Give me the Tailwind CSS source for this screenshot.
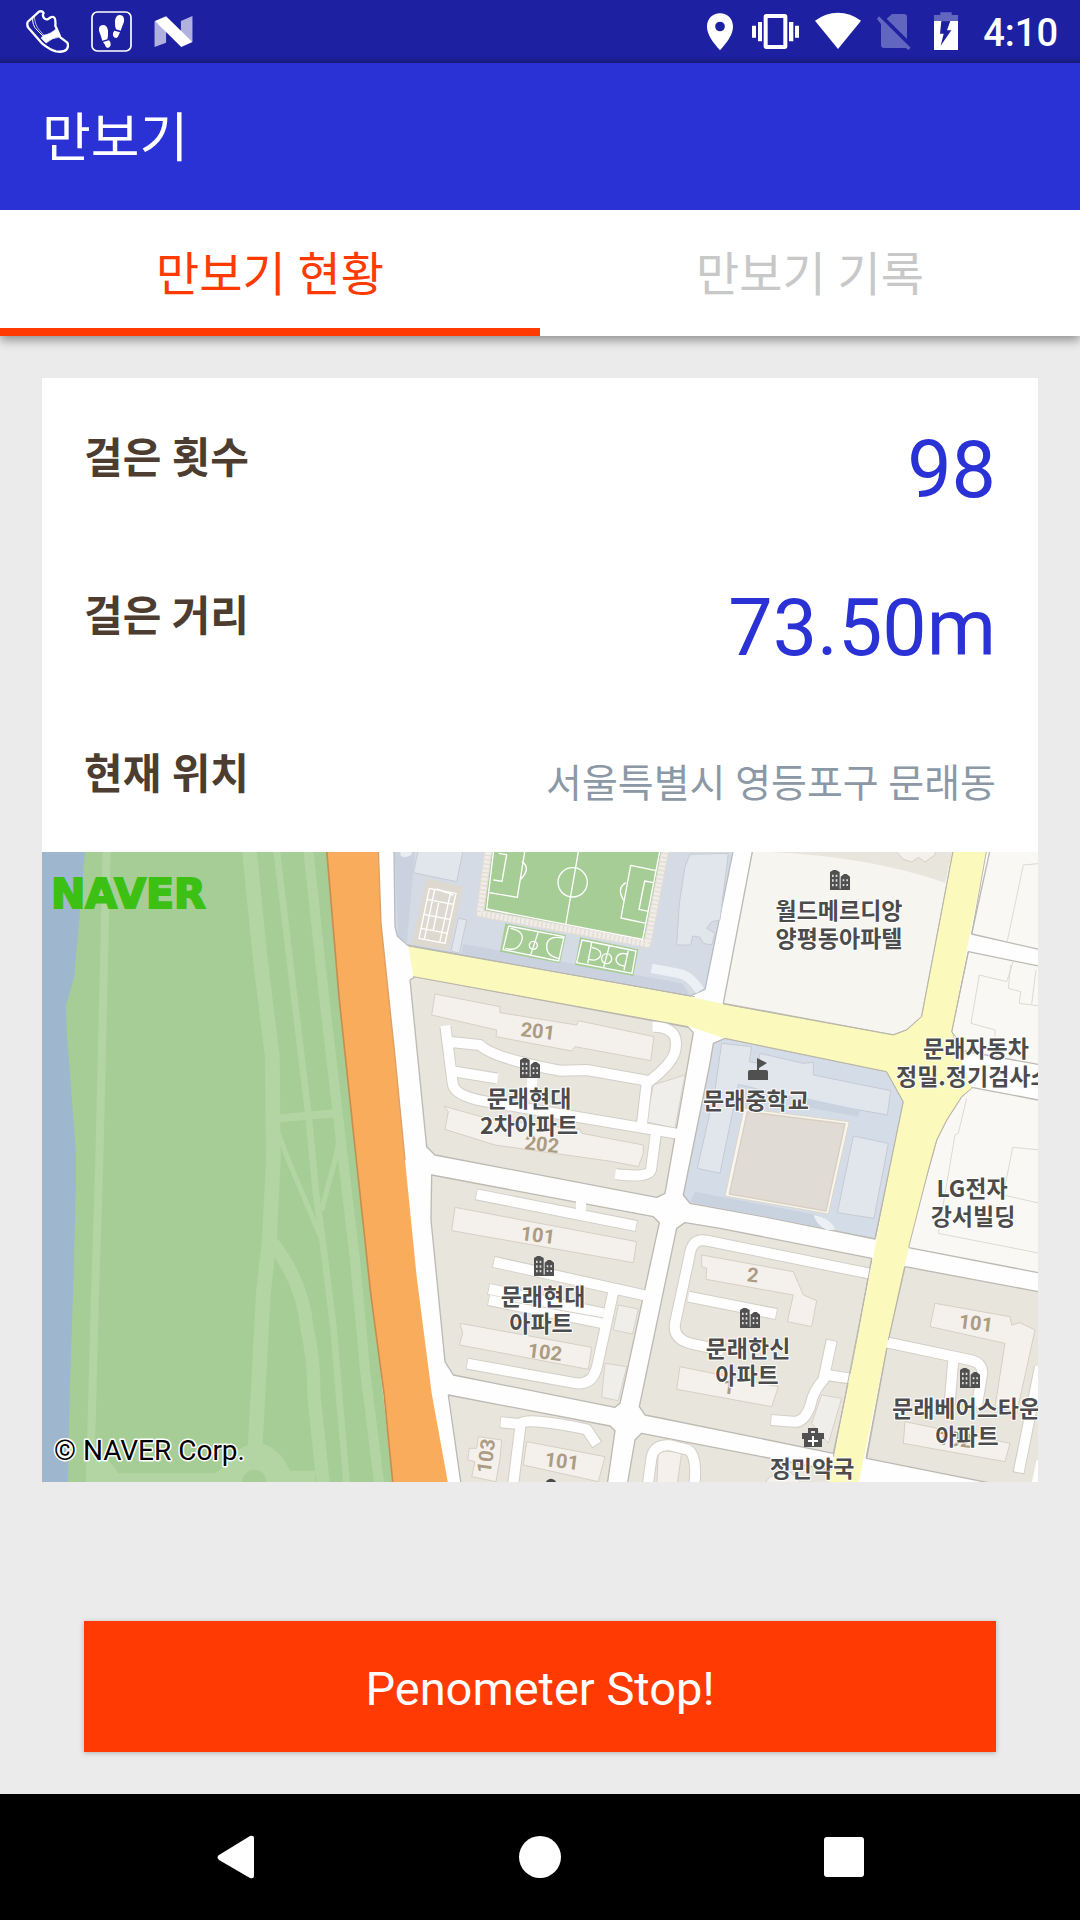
<!DOCTYPE html>
<html lang="ko">
<head>
<meta charset="utf-8">
<meta name="viewport" content="width=device-width, initial-scale=1">
<title>만보기</title>
<script src="https://cdn.jsdelivr.net/npm/@tailwindcss/browser@4"></script>
</head>
<body class="flex min-h-screen flex-col bg-[#ebebeb] font-[Roboto,'Noto_Sans_CJK_KR',sans-serif]">

<!-- Status bar -->
<div class="flex h-[63px] items-center justify-between bg-linear-to-b from-[#1d21a1] from-90% to-[#191c80] pr-[22px] pl-[26px] text-white">
  <div class="flex items-center gap-[22px]">
    <svg class="h-[43px] w-[43px]" viewBox="78 30 129 129" fill="none" stroke="#fff" stroke-width="7" stroke-linejoin="round" stroke-linecap="round" aria-label="신발">
      <path d="M83 66Q80 76 85 83L127 131Q150 150 168 154Q190 158 200 148Q207 138 202 128Q192 120 181 112L166 77Q168 54 160 51Q154 49 146 56Q138 61 132 54Q126 47 131 39Q126 31 117 35Z"/>
      <path d="M98 53Q96 76 111 90L130 109" stroke-width="3"/>
      <path d="M103 50Q105 76 118 90L131 105" stroke-width="2"/>
      <path d="M131 106Q154 102 171 84L180 111Q158 112 138 129L124 115Z" fill="#fff" stroke-width="2"/>
    </svg>
    <svg class="h-[41px] w-[41px]" viewBox="270 33 123 123" fill="#fff" aria-label="발자국">
      <rect x="273" y="36" width="117" height="117" rx="16" fill="none" stroke="#fff" stroke-width="5"/>
      <path d="M294 92Q292 76 306 75Q319 75 321 92Q322 108 319 118L304 122Q300 108 294 92Z"/>
      <path d="M306 126L324 121Q330 125 329 136Q327 144 320 144Q313 142 311 133Z"/>
      <path d="M369 65Q371 46 357 45Q344 45 342 62Q341 78 345 88L359 92Q363 80 369 65Z"/>
      <path d="M357 97L340 92Q334 98 336 107Q339 114 346 114Q351 112 353 106Z"/>
    </svg>
    <svg class="h-[31px] w-[39px]" viewBox="462 47 117 94" fill="#fff" aria-label="N">
      <path d="M463 62L498 88V128L463 141Z" opacity=".65"/>
      <path d="M543 62L578 47V126L543 98Z" opacity=".65"/>
      <path d="M464 62L498 48L578 126L544 141Z"/>
    </svg>
  </div>
  <div class="flex items-center gap-4">
    <svg class="h-[42px] w-[31px]" viewBox="75 33 93 126" fill="#fff" aria-label="위치">
      <path fill-rule="evenodd" d="M120 40C97 40 81 57 81 80C81 104 100 128 120 151C140 128 159 104 159 80C159 57 143 40 120 40ZM120 65A14.500 14.500 0 1 1 120 94A14.500 14.500 0 1 1 120 65Z"/>
    </svg>
    <svg class="h-[42px] w-[47px]" viewBox="216 33 141 126" fill="#fff" aria-label="진동">
      <path fill-rule="evenodd" d="M259 42H314Q322 42 322 50V139Q322 147 314 147H259Q251 147 251 139V50Q251 42 259 42ZM263 54V135H310V54Z"/>
      <path d="M216 77H228V113H216ZM234 66H246V124H234ZM327 66H340V124H327ZM345 77H357V113H345Z"/>
    </svg>
    <svg class="h-[42px] w-[46px]" viewBox="402 33 138 126" fill="#fff" aria-label="와이파이">
      <path d="M402 62Q434 38 471 38Q508 38 540 62L471 147Z"/>
    </svg>
    <svg class="h-[42px] w-[34px]" viewBox="591 33 102 126" fill="#6366be" aria-label="SIM 없음">
      <path d="M620 56L636 42H672Q681 42 681 51V117Z"/>
      <path d="M603 72L591 57L597 49L692 143L685 150L678 144H612Q603 144 603 135Z"/>
    </svg>
    <svg class="h-[42px] w-[40px]" viewBox="741 33 120 126" aria-label="충전 중">
      <path d="M762 64V45H781V37H815V45H834V64Z" fill="#6366be"/>
      <path fill="#fff" fill-rule="evenodd" d="M762 63H834V150H762ZM784 63L780 101H791L782 137L814 91H801L811 63Z"/>
    </svg>
    <time class="pt-[2px] text-[38px] leading-none font-medium">4:10</time>
  </div>
</div>

<!-- Title bar and tabs -->
<header class="relative shadow-[0_4px_10px_rgba(0,0,0,0.4)]">
  <div class="flex h-[147px] items-center bg-[#2a31d5] px-[42px] pt-[6px]">
    <h1 class="text-[53px] leading-none text-white">만보기</h1>
  </div>
  <nav class="grid h-[126px] grid-cols-2 bg-white text-[47px] leading-none">
    <a href="#status" aria-current="page" class="flex items-center justify-center border-b-8 border-[#ff3a02] pt-[10px] text-[#ff3a02]">만보기 현황</a>
    <a href="#history" class="flex items-center justify-center border-b-8 border-white pt-[10px] text-[#c8c8c8]">만보기 기록</a>
  </nav>
</header>

<main id="status" class="flex flex-1 flex-col px-[42px] py-[42px]">
  <section class="bg-white">
    <dl>
      <div class="flex h-[158px] items-center justify-between px-[42px]">
        <dt class="pt-[4px] text-[42px] leading-none font-bold text-[#4c3d30]">걸은 횟수</dt>
        <dd class="pt-[26px] text-[79px] leading-none text-[#2a31d5]">98</dd>
      </div>
      <div class="flex h-[158px] items-center justify-between px-[42px]">
        <dt class="pt-[4px] text-[42px] leading-none font-bold text-[#4c3d30]">걸은 거리</dt>
        <dd class="pt-[26px] text-[79px] leading-none text-[#2a31d5]">73.50m</dd>
      </div>
      <div class="flex h-[158px] items-center justify-between px-[42px]">
        <dt class="pt-[4px] text-[42px] leading-none font-bold text-[#4c3d30]">현재 위치</dt>
        <dd class="pt-[22px] text-[39px] leading-none text-[#8c98a6]">서울특별시 영등포구 문래동</dd>
      </div>
    </dl>

    <!-- Map: terrain is drawn in thirds of a unit, labels in whole units -->
    <svg class="block w-full" viewBox="42 852 996 630" role="img" aria-label="문래동 지도">
      <defs>
        <symbol id="apt" viewBox="0 0 60 60">
          <path d="M0 60V6L10 0H18L29 6V60ZM32 60V20L42 12H50L60 20V60Z" fill="#505050"/>
          <path d="M0 56H60V60H0Z" fill="#505050"/>
          <path d="M6 14h5v7H6zM17 14h5v7h-5zM6 28h5v7H6zM17 28h5v7h-5zM6 42h5v7H6zM17 42h5v7h-5zM38 28h5v6h-5zM49 28h5v6h-5zM38 42h5v6h-5zM49 42h5v6h-5z" fill="#ddd"/>
        </symbol>
      </defs>
      <rect x="42" y="852" width="996" height="630" fill="#fefefe"/>

      <!-- River park -->
      <g transform="translate(40 850) scale(.33333)" fill="none" stroke="#b3d5a3" stroke-linejoin="round">
        <path d="M0 0H862L950 930L1060 1905H0Z" fill="#a7cd96" stroke="none"/>
        <path d="M0 0H135L120 180L103 380L78 465L80 540L95 740L108 910V1000L100 1300L90 1600L84 1905H0Z" fill="#9fb6cf" stroke="none"/>
        <path d="M200 0L190 420L178 930L165 1330L150 1905" stroke-width="24"/>
        <path d="M628 0L660 320L697 620L700 930L688 1170L670 1330L645 1800" stroke-width="44"/>
        <path d="M710 0L760 420L805 790L828 1030L850 1190L880 1430L920 1905" stroke-width="20"/>
        <path d="M805 0L850 420L900 850L945 1230L975 1560L1018 1905" stroke-width="30"/>
        <path d="M720 805L885 790" stroke-width="24"/>
        <path d="M715 850L745 930L842 1160M897 870L885 930L845 1080" stroke-width="15"/>
        <path d="M695 1175Q790 1300 800 1430Q822 1520 822 1640L850 1905" stroke-width="40"/>
        <path d="M138 1905V1830H205L235 1870H525L550 1850Q600 1780 650 1780Q710 1780 750 1862H825V1905Z" fill="#b3d5a3" stroke="none"/>
        <circle cx="643" cy="1895" r="36" fill="#a7cd96" stroke="none"/>
      </g>

      <!-- Expressway -->
      <g transform="translate(320 850) scale(.33333)">
        <path d="M20 0L57 440L109 930L152 1330L192 1630L219 1905H385L335 1630L290 1280L255 930L225 620L183 220L175 0Z" fill="#f9ac5b"/>
        <path d="M20 0L57 440L109 930L152 1330L192 1630L219 1905" fill="none" stroke="#c58f50" stroke-width="5"/>
        <path d="M175 0L183 220L225 620L255 930" fill="none" stroke="#dba069" stroke-width="4"/>
      </g>

      <!-- North: sports ground -->
      <g transform="translate(320 850) scale(.33333)" stroke-linejoin="round">
        <path d="M222 0L225 230L232 258L262 285L1110 438L1155 418L1240 0Z" fill="#d4dbe5" stroke="#b9bcc2" stroke-width="4"/>
        <path d="M224 0H285L260 283L234 256Z" fill="#c9d2de"/>
        <path d="M430 282L1085 400L1110 434L425 312Z" fill="#c9d2de"/>
        <path d="M295 0H430L410 95L280 68Z" fill="#e1e6ed" stroke="#c6cbd3" stroke-width="3"/>
        <path d="M240 0H275V15L255 22L242 18Z" fill="#e8edf1"/>
        <path d="M415 205L440 210L418 310L393 303Z" fill="#e1e6ed" stroke="#c6cbd3" stroke-width="3"/>
        <path d="M320 85L430 110L385 300L275 283Z" fill="#ded9d0"/>
        <path d="M328 115L408 130L375 280L297 265ZM344 118L313 268M392 127L359 277M322 148L400 163M311 193L393 209M305 235L384 250M356 158L340 240M350 117L400 135" fill="none" stroke="#fff" stroke-width="4"/>
        <path d="M508 -20L480 190L982 282L1040 -20Z" fill="#a7cd96" stroke="#e2dcd5" stroke-width="24"/>
        <path d="M508 -20L480 190L982 282L1040 -20Z" fill="none" stroke="#f0ece7" stroke-width="18" stroke-dasharray="9 4"/>
        <g fill="none" stroke="#fff" stroke-width="4">
          <path d="M521 0L500 177L968 268L1020 0M776 0L737 225M508 128L592 142L615 0M520 90L546 94L560 14L536 10M606 35Q634 55 602 88M1008 62L932 46L903 204L978 220M1000 98L974 93L957 178L985 184M918 98Q888 115 912 152"/>
          <circle cx="758" cy="97" r="44"/>
        </g>
        <path d="M556 220L738 255L720 340L540 305ZM780 262L955 298L940 378L765 345Z" fill="#a7cd96"/>
        <g fill="none" stroke="#fff" stroke-width="4">
          <path d="M566 228L732 260L716 333L549 299ZM654 248L632 315M572 235Q620 245 602 280Q590 305 556 295M730 264Q680 255 680 290Q680 318 716 325M786 270L948 303L936 370L770 338ZM868 288L850 355M815 278L803 340M925 302L912 360M815 292Q850 300 840 320Q830 335 806 328M922 312Q890 305 888 330Q890 345 912 348"/>
          <circle cx="640" cy="286" r="12"/><circle cx="860" cy="326" r="15"/>
        </g>
        <path d="M1110 13L1225 10L1200 210L1175 215L1160 235L1185 250L1175 285L1150 280L1140 262L1118 258L1112 285L1070 285L1078 160L1095 50Z" fill="#e1e6ed" stroke="#c6cbd3" stroke-width="3"/>
        <path d="M995 355L1075 370Q1110 375 1140 422" fill="none" stroke="#eaf0f4" stroke-width="28"/>
      </g>

      <!-- North east blocks and middle school -->
      <g transform="translate(670 850) scale(.33333)" stroke="#bdb9b3" stroke-width="4" stroke-linejoin="round">
        <path d="M248 0L160 460L670 555L710 540L755 500L850 0Z" fill="#f6f5f0"/>
        <path d="M300 6Q600 20 825 98L848 0Z" fill="#e8e5dd" stroke="none"/>
        <path d="M675 0L700 28L725 36L745 22L765 36L795 15V0Z" fill="#f4f1ec" stroke="#d6cfc4" stroke-width="3"/>
        <path d="M960 0L905 252L1115 300V0Z" fill="#f9f8f4"/>
        <path d="M1115 40L1060 45L1012 272" fill="none" stroke="#dcdad4" stroke-width="3"/>
        <path d="M895 305L1115 350V645L865 600L845 545Z" fill="#f9f8f4"/>
        <path d="M928 375L1010 395L1030 335M1022 345L1015 415L1052 425L1048 460L1110 468M1098 360L1085 462M975 560V540L903 520L928 375" fill="none" stroke="#dcdad4" stroke-width="3"/>
        <path d="M905 712L1115 752V1270L712 1192L775 960L800 870L830 810L875 740Z" fill="#f9f8f4"/>
        <path d="M890 745L865 850L855 855L805 1150L1110 1210M1110 900L1028 892L1000 1035L1110 1060" fill="none" stroke="#dcdad4" stroke-width="3"/>
        <path d="M165 565L130 580L120 640L40 1035L60 1060L280 1100L615 1167L660 950L700 755L650 665Z" fill="#d4dce7"/>
        <path d="M75 1025L440 1095L490 1140L60 1056Z" fill="#c9d3df" stroke="none"/>
        <path d="M430 1095Q485 1105 495 1140H470Q440 1125 430 1095Z" fill="#eaf0f4" stroke="none"/>
        <path d="M155 580L245 590L238 635L265 640L270 610L400 640L430 637V675L662 722L652 795L375 745L205 703L150 970L82 955L135 720Z" fill="#e1e6ed" stroke="#c6cbd3" stroke-width="3"/>
        <path d="M550 858L655 880L612 1105L502 1088Z" fill="#e1e6ed" stroke="#c6cbd3" stroke-width="3"/>
        <path d="M390 740L570 780L565 800L400 770Z" fill="#c9d3df" stroke="none"/>
        <path d="M222 775L538 815L475 1092L165 1038Z" fill="#f7f5ef" stroke="#ddd6c8" stroke-width="3"/>
        <path d="M232 785L525 822L468 1083L178 1032Z" fill="#e0dcd5" stroke="#d8cfc0" stroke-width="4"/>
      </g>

      <!-- Housing blocks west -->
      <g transform="translate(320 850) scale(.33333)" stroke="#bdb9b3" stroke-width="4" stroke-linejoin="round">
        <path d="M270 390L285 380L1105 532L1120 548L1035 1030L1010 1042L345 915L320 890Z" fill="#e8e5dd"/>
        <path d="M1000 705L1095 675L1065 835L978 815Z" fill="#efeeea" stroke="#d6d2ca" stroke-width="3"/>
        <path d="M345 432L540 470V488L770 525L775 512L1002 560L992 632L765 590L755 603L528 560L530 540L335 495Z" fill="#f4f1ec" stroke="#d6cfc4" stroke-width="3"/>
        <path d="M372 768L395 775L500 805L780 838L785 850L970 885V910L955 950L880 935L525 885L375 838L385 785Z" fill="#f4f1ec" stroke="#d6cfc4" stroke-width="3"/>
        <path d="M376 530L398 700Q402 738 500 755L1065 850M385 575L480 585Q520 625 720 662L800 660L980 692M405 665L530 685M1000 530Q1080 530 1066 600Q1060 640 980 700L965 825M1008 850L993 960Q985 985 888 972" fill="none" stroke="#d3cec6" stroke-width="36"/>
        <path d="M376 527L398 700Q402 738 500 755L1070 851M385 575L480 585Q520 625 720 662L800 660L980 692M405 665L533 686M998 530Q1080 530 1066 600Q1060 640 980 700L965 830M1008 845L993 960Q985 985 886 972M638 670L632 750" fill="none" stroke="#fefefe" stroke-width="30"/>

        <path d="M335 975L1000 1100L1018 1118L900 1660L885 1672L400 1575L375 1535L333 1110Z" fill="#e8e5dd"/>
        <path d="M405 1072L950 1175L940 1238L395 1142ZM420 1420L815 1492L805 1558L418 1485L428 1450Z" fill="#f4f1ec" stroke="#d6cfc4" stroke-width="3"/>
        <path d="M895 1365L955 1377L938 1452L880 1440ZM855 1540L920 1550L895 1652L845 1642Z" fill="#efeeea" stroke="#d6d2ca" stroke-width="3"/>
        <path d="M468 1033L950 1128M520 1235L970 1335M505 1317L850 1390M505 1350L850 1420M880 1325L832 1545Q820 1605 770 1600L440 1541" fill="none" stroke="#d3cec6" stroke-width="36"/>
        <path d="M470 1033L948 1128M522 1236L975 1336M507 1317L850 1390M507 1350L850 1420M880 1325L832 1545Q820 1605 770 1600L442 1541M783 1050V1090" fill="none" stroke="#fefefe" stroke-width="30"/>
        <path d="M560 1352L850 1404" fill="none" stroke="#d3cec6" stroke-width="3"/>

        <path d="M385 1635L870 1728L885 1742L860 1915H425Z" fill="#e8e5dd"/>
        <path d="M620 1775L855 1820L835 1895L610 1845ZM475 1760L545 1770L540 1825L528 1895L455 1880L465 1835L443 1830L448 1795L470 1795Z" fill="#f4f1ec" stroke="#d6cfc4" stroke-width="3"/>
        <path d="M540 1717L600 1722Q620 1700 800 1738L832 1785M602 1722L578 1915" fill="none" stroke="#d3cec6" stroke-width="36"/>
        <path d="M542 1717L600 1722Q620 1700 800 1738L830 1783M602 1722L578 1915" fill="none" stroke="#fefefe" stroke-width="30"/>
        <circle cx="693" cy="1902" r="16" fill="#4a4a4a" stroke="none"/>
      </g>

      <!-- Housing blocks east -->
      <g transform="translate(670 1160) scale(.33333)" stroke="#bdb9b3" stroke-width="4" stroke-linejoin="round">
        <path d="M45 188L150 205L605 295L550 600L490 880L0 780L-75 765L-92 740L20 205Z" fill="#e8e5dd"/>
        <path d="M95 285L370 335L385 370L400 405L440 422L425 500L352 485L370 405L108 358L110 325L95 320ZM30 620L325 680L305 740L20 688Z" fill="#f4f1ec" stroke="#d6cfc4" stroke-width="3"/>
        <path d="M455 705L515 715L475 850L425 790Z" fill="#efeeea" stroke="#d6d2ca" stroke-width="3"/>
        <path d="M595 340L110 242Q65 232 58 290L15 490Q8 535 60 550L160 572M55 410L320 462M485 540L460 660Q430 690 420 740Q400 790 370 785L302 780M470 645L535 655" fill="none" stroke="#d3cec6" stroke-width="36"/>
        <path d="M600 341L110 242Q65 232 58 290L15 490Q8 535 60 550L160 572M55 410L318 462M485 542L460 660Q430 690 420 740Q400 790 370 785L304 780M470 645L540 655" fill="none" stroke="#fefefe" stroke-width="30"/>
        <path d="M705 320L1115 397V1000L590 895L655 540Z" fill="#e8e5dd"/>
        <path d="M795 430L1020 470L1025 495L1050 488L1095 510L1040 760L975 740L1005 550L780 500ZM705 785L1020 850L1005 905L700 850Z" fill="#f4f1ec" stroke="#d6cfc4" stroke-width="3"/>
        <path d="M655 548L900 600Q945 610 935 650L920 740M850 600L838 740M1110 620L1045 940" fill="none" stroke="#d3cec6" stroke-width="36"/>
        <path d="M650 547L900 600Q945 610 935 650L920 740M850 600L838 740M1110 620L1046 937" fill="none" stroke="#fefefe" stroke-width="30"/>
        <path d="M1085 970L1100 900H1115V975Z" fill="#fefefe" stroke="none"/>
        <path d="M-105 840L-85 820L490 932L480 985H-130Z" fill="#e8e5dd"/>
        <path d="M-35 870L35 878L20 985H-40Z" fill="#f4f1ec" stroke="#d6cfc4" stroke-width="3"/>
        <path d="M-68 985L-55 890Q-45 852 0 856L50 868Q85 880 72 985" fill="none" stroke="#d3cec6" stroke-width="36"/>
        <path d="M-68 985L-55 890Q-45 852 0 856L50 868Q85 880 72 985" fill="none" stroke="#fefefe" stroke-width="30"/>
        <path d="M280 975L300 950L360 935L400 975Z" fill="#f4f1ec" stroke="#d6cfc4" stroke-width="3"/>
      </g>

      <!-- Main yellow roads -->
      <g transform="translate(670 850) scale(.33333)">
        <path d="M-785 288L60 440L160 462L670 555L710 540L755 500L850 0H950L900 250L845 545L905 715L875 740L830 810L800 870L775 960L710 1220L650 1490L565 1905H475L550 1530L610 1220L660 950L700 755L650 665L165 565L60 530L-770 380Z" fill="#fbf9bb"/>
        <path d="M-785 288L75 440M160 462L670 555L710 540L755 500L850 0M950 0L905 252M895 305L845 545L865 570M905 715L875 740L830 810L800 870L775 960L716 1192M704 1250L655 1470M650 1495L588 1825M490 1820L605 1230M616 1165L660 950L700 755L650 665L165 565M55 530L-770 380" fill="none" stroke="#b9b5a8" stroke-width="3"/>
      </g>

      <!-- Building numbers -->
      <g class="font-[Roboto,sans-serif] text-[20px] font-bold" fill="#ac9c83" text-anchor="middle">
        <text transform="translate(537 1038) rotate(7)">201</text>
        <text transform="translate(541 1151) rotate(7)">202</text>
        <text transform="translate(537 1242) rotate(7)">101</text>
        <text transform="translate(544 1359) rotate(7)">102</text>
        <text transform="translate(493 1457) rotate(-82)">103</text>
        <text transform="translate(561 1468) rotate(7)">101</text>
        <text transform="translate(752 1282) rotate(7)">2</text>
        <text transform="translate(728 1394) rotate(7)">1</text>
        <text transform="translate(975 1330) rotate(7)">101</text>
        <text transform="translate(954 1446) rotate(7)">102</text>
      </g>

      <!-- Place names -->
      <g class="font-['Noto_Sans_CJK_KR',sans-serif] text-[23px] font-bold" fill="#4c4c4c" stroke="#fff" stroke-width="2" stroke-linejoin="round" paint-order="stroke" text-anchor="middle">
        <text x="839" y="919">월드메르디앙</text>
        <text x="839" y="947">양평동아파텔</text>
        <text x="529" y="1107">문래현대</text>
        <text x="529" y="1134">2차아파트</text>
        <text x="756" y="1109">문래중학교</text>
        <text x="976" y="1057">문래자동차</text>
        <text x="896" y="1085" text-anchor="start">정밀.정기검사소</text>
        <text x="972" y="1197">LG전자</text>
        <text x="973" y="1225">강서빌딩</text>
        <text x="543" y="1305">문래현대</text>
        <text x="541" y="1332">아파트</text>
        <text x="748" y="1357">문래한신</text>
        <text x="747" y="1384">아파트</text>
        <text x="892" y="1417" text-anchor="start">문래베어스타운</text>
        <text x="967" y="1445">아파트</text>
        <text x="812" y="1477">정민약국</text>
      </g>

      <!-- Markers -->
      <use href="#apt" x="830" y="870" width="20" height="20"/>
      <use href="#apt" x="520" y="1058" width="20" height="20"/>
      <use href="#apt" x="534" y="1256" width="20" height="20"/>
      <use href="#apt" x="740" y="1308" width="20" height="20"/>
      <use href="#apt" x="960" y="1368" width="20" height="20"/>
      <path d="M757 1058L767 1063L759 1068V1070H766Q768 1070 768 1072V1080H748V1072Q748 1070 750 1070H757Z" fill="#505050"/>
      <g fill="#505050">
        <path fill-rule="evenodd" d="M808 1428H818V1433H824V1439H802V1433H808ZM811 1431V1433H815V1431Z"/>
        <path d="M804 1438H822V1447H804Z"/>
        <path d="M812 1436H814V1440H818V1442H814V1446H812V1442H808V1440H812Z" fill="#fff"/>
      </g>

      <text x="51" y="908" class="font-['DejaVu_Sans',sans-serif] text-[41px] font-bold" fill="#3bc013" stroke="#3bc013" stroke-width="2">NAVER</text>
      <text x="54" y="1460" class="font-[Roboto,sans-serif] text-[28px]" fill="#000" stroke="#fff" stroke-width="3" stroke-linejoin="round" paint-order="stroke">© NAVER Corp.</text>
    </svg>
  </section>

  <button type="button" class="mx-[42px] mt-auto h-[131px] bg-[#ff3a02] pt-[3px] text-[47px] leading-none text-white shadow-[0_1px_5px_rgba(0,0,0,0.25)]">Penometer Stop!</button>
</main>

<!-- Navigation bar -->
<footer class="flex h-[126px] items-center justify-center gap-[256px] bg-black">
  <button type="button" aria-label="뒤로" class="h-12 w-12">
    <svg class="h-12 w-12" viewBox="0 0 48 48" fill="#fff"><path d="M7 22L38 3Q42 2 42 5V43Q42 46 38 45L7 27Q4 24 7 22Z"/></svg>
  </button>
  <button type="button" aria-label="홈" class="h-12 w-12">
    <svg class="h-12 w-12" viewBox="0 0 48 48" fill="#fff"><circle cx="24" cy="24" r="21"/></svg>
  </button>
  <button type="button" aria-label="최근 앱" class="h-12 w-12">
    <svg class="h-12 w-12" viewBox="0 0 48 48" fill="#fff"><rect x="4" y="4" width="40" height="40" rx="3"/></svg>
  </button>
</footer>
</body>
</html>
